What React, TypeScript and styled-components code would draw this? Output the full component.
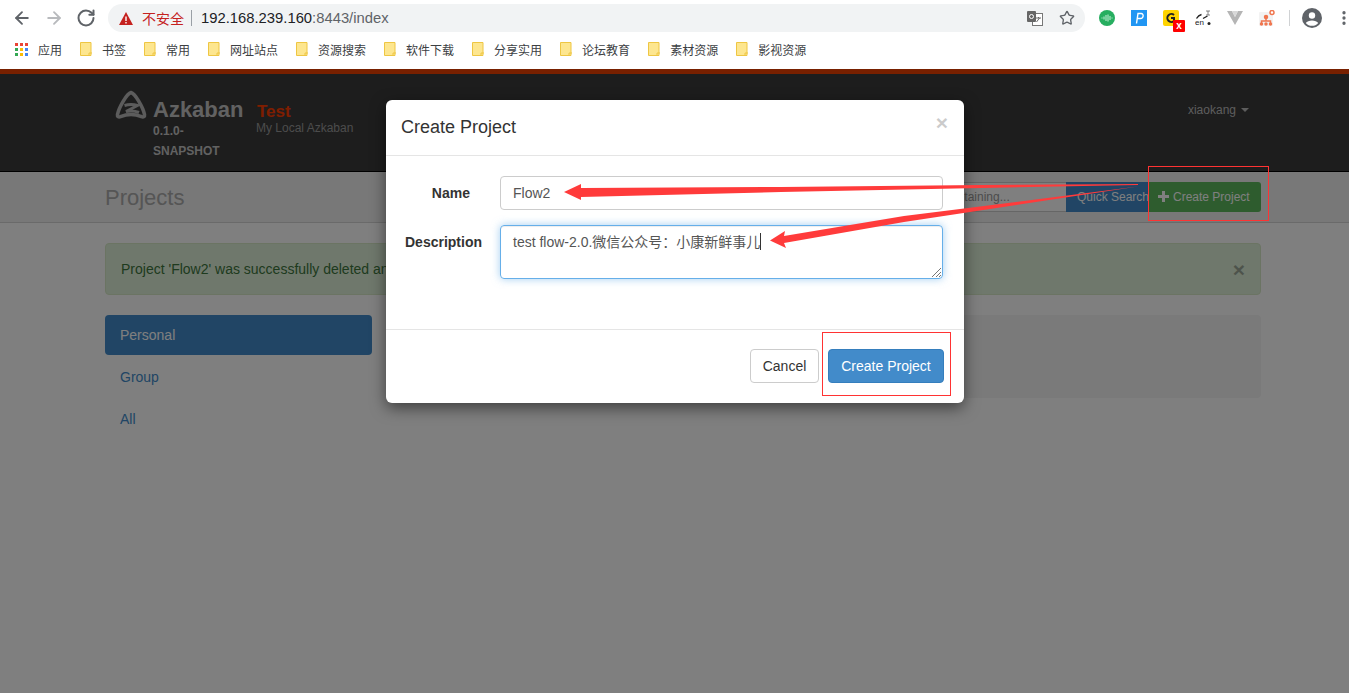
import { createGlobalStyle, styled } from "styled-components";
import { ArrowLeft, ArrowRight, RotateCw, Star, MoreVertical } from "lucide-react";

const bookmarks = ["书签", "常用", "网址站点", "资源搜索", "软件下载", "分享实用", "论坛教育", "素材资源", "影视资源"];

const GlobalStyle = createGlobalStyle`
  html, body {
    margin: 0;
    padding: 0;
    height: 100%;
    background: #fff;
    overflow: hidden;
  }
  body {
    font-family: "Liberation Sans", "Noto Sans CJK SC", sans-serif;
    font-size: 14px;
    color: #333;
  }
  * { box-sizing: border-box; }
`;

const Screen = styled.div`
  position: relative;
  width: 1352px;
  height: 693px;
  overflow: hidden;
`;

const Toolbar = styled.div`
  display: flex;
  align-items: center;
  height: 36px;
  padding: 0 0 0 12px;
`;

const NavButton = styled.span<{ $muted?: boolean }>`
  display: flex;
  flex-shrink: 0;
  width: 32px;
  color: ${(p) => (p.$muted ? "#b8babd" : "#5f6368")};
`;

const Omnibox = styled.div`
  display: flex;
  flex-shrink: 0;
  align-items: center;
  width: 977px;
  height: 28px;
  padding: 0 11px;
  border-radius: 14px;
  background: #f1f3f4;
`;

const Insecure = styled.span`
  margin-left: 9px;
  color: #c5221f;
  font-size: 14px;
`;

const Divider = styled.span`
  width: 1px;
  height: 16px;
  margin: 0 9px 0 7px;
  background: #9aa0a6;
`;

const Host = styled.span`
  color: #202124;
  font-size: 14.8px;
`;

const UrlRest = styled.span`
  flex: 1;
  color: #5f6368;
  font-size: 14.8px;
`;

const OmniIcons = styled.span`
  display: flex;
  align-items: center;
  gap: 16px;
  margin-right: -1px;
  color: #5f6368;
`;

const Extensions = styled.div`
  display: flex;
  flex-shrink: 0;
  align-items: center;
  margin-left: 6px;
`;

const ExtSlot = styled.span`
  position: relative;
  display: flex;
  flex-shrink: 0;
  align-items: center;
  justify-content: center;
  width: 32px;
  height: 28px;
`;

const ExtSeparator = styled.span`
  width: 1px;
  height: 16px;
  margin: 0 6px;
  background: #d0d2d4;
`;

const XBadge = styled.span`
  position: absolute;
  left: 18px;
  top: 16px;
  width: 12px;
  height: 12px;
  border-radius: 1px;
  background: #f00;
  color: #fff;
  font-size: 10px;
  font-weight: 700;
  line-height: 11px;
  text-align: center;
`;

const MoreButton = styled.span`
  display: flex;
  flex-shrink: 0;
  margin-left: 7px;
  color: #5f6368;
`;

const BookmarkBar = styled.div`
  display: flex;
  align-items: center;
  height: 33px;
  padding: 0 0 7px 15px;
  font-size: 12px;
  color: #3c4043;
`;

const Bookmark = styled.span`
  display: flex;
  align-items: center;
  gap: 10px;
  margin-right: 18px;
`;

const Page = styled.div`
  position: relative;
  width: 1349px;
  height: 624px;
  border-top: 5px solid #f04000;
  background: #fff;
`;

const TopBar = styled.header`
  display: flex;
  justify-content: space-between;
  height: 98px;
  padding: 16px 100px 0 115px;
  background: #3b3b3b;
  border-bottom: 1px solid #000;
`;

const Brand = styled.div`
  display: flex;
  align-items: flex-start;
`;

const BrandName = styled.div`
  width: 103px;
  margin-left: 6px;
  color: #c4c4c4;
  font-weight: 700;
`;

const Wordmark = styled.div`
  margin: 8px 0 -1px;
  font-size: 22px;
  line-height: 24px;
`;

const Version = styled.div`
  font-size: 12px;
  line-height: 20px;
  color: #c4c4c4;
`;

const Instance = styled.div`
  margin-top: 12px;
`;

const InstanceName = styled.div`
  margin-left: 1px;
  color: #ff3c00;
  font-size: 17px;
  font-weight: 700;
  line-height: 20px;
`;

const InstanceNote = styled.div`
  margin-top: -1px;
  color: #999;
  font-size: 12px;
  line-height: 15px;
`;

const UserMenu = styled.div`
  display: flex;
  align-items: center;
  gap: 5px;
  height: 19px;
  margin-top: 10px;
  color: #bbb;
  font-size: 12px;
`;

const Caret = styled.span`
  width: 0;
  height: 0;
  margin-top: 1px;
  border-top: 4px solid #bbb;
  border-left: 4px solid transparent;
  border-right: 4px solid transparent;
`;

const HeaderBand = styled.div`
  display: flex;
  align-items: center;
  justify-content: space-between;
  height: 51px;
  padding: 0 88px 0 105px;
  background: #f0f0f0;
  border-bottom: 1px solid #d5d5d5;
`;

const PageTitle = styled.h1`
  margin: 2px 0 0;
  color: #aaa;
  font-size: 22px;
  font-weight: 400;
`;

const SearchGroup = styled.div`
  display: flex;
  height: 30px;
  margin-top: -1px;
`;

const SearchInput = styled.div`
  width: 300px;
  padding-left: 178px;
  border: 1px solid #ccc;
  border-right: none;
  background: #fff;
  color: #999;
  font-size: 12px;
  line-height: 28px;
  white-space: nowrap;
  overflow: hidden;
`;

const ToolButton = styled.div<{ $tone: "blue" | "green" }>`
  display: flex;
  flex-shrink: 0;
  align-items: center;
  gap: 4px;
  height: 30px;
  padding: 0 0 0 ${(p) => (p.$tone === "blue" ? "11px" : "9px")};
  color: #fff;
  font-size: 12px;
  white-space: nowrap;
  background: ${(p) => (p.$tone === "blue" ? "#428bca" : "#5cb85c")};
  border-radius: ${(p) => (p.$tone === "blue" ? "0" : "0 3px 3px 0")};
  width: ${(p) => (p.$tone === "blue" ? "83px" : "112px")};
`;

const Alert = styled.div`
  display: flex;
  align-items: center;
  justify-content: space-between;
  height: 52px;
  margin: 20px 88px 20px 105px;
  padding: 0 16px 0 15px;
  background: #dff0d8;
  border: 1px solid #d6e9c6;
  border-radius: 4px;
  color: #3c763d;
`;

const AlertClose = styled.span`
  color: #000;
  opacity: 0.3;
  font-size: 21px;
  font-weight: 700;
  line-height: 1;
  margin-right: -1px;
`;

const Content = styled.div`
  display: flex;
  gap: 15px;
  padding: 0 88px 0 105px;
`;

const SideNav = styled.nav`
  display: flex;
  flex-direction: column;
  gap: 2px;
  width: 267px;
`;

const SideItem = styled.div<{ $active?: boolean }>`
  height: 40px;
  padding: 0 15px;
  border-radius: 4px;
  line-height: 40px;
  color: ${(p) => (p.$active ? "#fff" : "#428bca")};
  background: ${(p) => (p.$active ? "#428bca" : "transparent")};
`;

const Well = styled.div`
  flex: 1;
  height: 83px;
  background: #f5f5f5;
  border-radius: 4px;
`;

const Backdrop = styled.div`
  position: absolute;
  inset: -5px 0 0 0;
  background: rgba(0, 0, 0, 0.5);
`;

const Modal = styled.div`
  position: absolute;
  left: 386px;
  top: 100px;
  width: 578px;
  height: 303px;
  background: #fff;
  border-radius: 6px;
  box-shadow: 0 5px 15px rgba(0, 0, 0, 0.5);
`;

const ModalHeader = styled.div`
  display: flex;
  align-items: flex-start;
  justify-content: space-between;
  height: 56px;
  padding: 15px 15px 0;
  border-bottom: 1px solid #e5e5e5;
`;

const ModalTitle = styled.h4`
  margin: 0;
  color: #333;
  font-size: 18px;
  font-weight: 400;
  line-height: 25px;
`;

const ModalClose = styled.span`
  margin: -3px 1px 0 0;
  color: #000;
  opacity: 0.2;
  font-size: 21px;
  font-weight: 700;
  line-height: 21px;
`;

const ModalBody = styled.div`
  display: grid;
  grid-template-columns: 81px 443px;
  grid-auto-rows: min-content;
  column-gap: 18px;
  row-gap: 15px;
  height: 174px;
  padding: 20px 0 0 15px;
  border-bottom: 1px solid #e5e5e5;
`;

const FieldLabel = styled.label<{ $inset?: number }>`
  padding: 7px ${(p) => p.$inset ?? 0}px 0 0;
  font-weight: 700;
  line-height: 20px;
  text-align: right;
`;

const TextField = styled.div`
  height: 34px;
  padding: 0 12px;
  border: 1px solid #ccc;
  border-radius: 4px;
  color: #555;
  line-height: 32px;
`;

const TextArea = styled.div`
  position: relative;
  height: 54px;
  padding: 6px 12px;
  border: 1px solid #66afe9;
  border-radius: 4px;
  color: #555;
  line-height: 20px;
  box-shadow: inset 0 1px 1px rgba(0, 0, 0, 0.075), 0 0 8px rgba(102, 175, 233, 0.6);
`;

const TextCaret = styled.span`
  display: inline-block;
  width: 1px;
  height: 17px;
  vertical-align: -3px;
  background: #333;
`;

const ResizeGrip = styled.svg`
  position: absolute;
  right: 1px;
  bottom: 1px;
`;

const ModalFooter = styled.div`
  display: flex;
  justify-content: flex-end;
  gap: 9px;
  padding: 19px 20px 0 0;
`;

const FooterButton = styled.div<{ $primary?: boolean }>`
  width: ${(p) => (p.$primary ? "116px" : "69px")};
  height: 34px;
  border: 1px solid ${(p) => (p.$primary ? "#357ebd" : "#ccc")};
  border-radius: 4px;
  background: ${(p) => (p.$primary ? "#428bca" : "#fff")};
  color: ${(p) => (p.$primary ? "#fff" : "#333")};
  line-height: 32px;
  text-align: center;
`;

const Annotations = styled.svg`
  position: absolute;
  left: 0;
  top: 0;
  pointer-events: none;
`;

const Folder = () => (
  <svg width="12" height="14" viewBox="0 0 12 14">
    <path d="M.5.5h10.5v13H.5z" fill="#fde68f" stroke="#eec643" />
    <path d="M9 13.5v-2.500h3" fill="none" stroke="#eec643" />
  </svg>
);

const Apps = () => (
  <svg width="13" height="13" viewBox="0 0 13 13">
    {["#ea4335", "#ea4335", "#ea4335", "#34a853", "#fbbc05", "#4285f4", "#34a853", "#fbbc05", "#4285f4"].map((c, i) => (
      <rect key={i} x={(i % 3) * 5} y={Math.floor(i / 3) * 5} width="3" height="3" fill={c} />
    ))}
  </svg>
);

const AzkabanLogo = () => (
  <svg width="32" height="31" viewBox="0 0 32 31" fill="none" stroke="#b8b8b8">
    <path d="M16 2.500C12 3.500 4 17 2.500 24.500c-.3 2 1 3 3 2.200 6.500-2.700 14.500-2.700 21 0 2 .8 3.300-.2 3-2.200C28 17 20 3.500 16 2.500z" strokeWidth="3.600" strokeLinejoin="round" />
    <path d="M9.500 15.500c4-1.200 9-1.200 13 0l-11.500 6c4-.8 9-.6 13 1" strokeWidth="3" />
  </svg>
);

export default function App() {
  return (
    <Screen>
      <GlobalStyle />
      <Toolbar>
        <NavButton><ArrowLeft size={20} strokeWidth={2.2} /></NavButton>
        <NavButton $muted><ArrowRight size={20} strokeWidth={2.2} /></NavButton>
        <NavButton><RotateCw size={20} strokeWidth={2.4} /></NavButton>
        <Omnibox>
          <svg width="14" height="13" viewBox="0 0 14 13">
            <path d="M7 0l7 13H0z" fill="#c5221f" />
            <path d="M6.300 4.500h1.400v4.500H6.300zM6.300 10h1.400v1.400H6.300z" fill="#fff" />
          </svg>
          <Insecure>不安全</Insecure>
          <Divider />
          <Host>192.168.239.160</Host>
          <UrlRest>:8443/index</UrlRest>
          <OmniIcons>
            <svg width="16" height="16" viewBox="0 0 16 16">
              <rect x="5.500" y="3.500" width="10" height="12" fill="#fff" stroke="#777" />
              <rect x="0" y="1" width="9" height="11" rx="1" fill="#666" />
              <circle cx="4.500" cy="6.500" r="2" fill="none" stroke="#fff" />
              <path d="M9 8h5M11.500 7v1M9.500 12l3-4" stroke="#666" fill="none" />
            </svg>
            <Star size={16} strokeWidth={2} />
          </OmniIcons>
        </Omnibox>
        <Extensions>
          <ExtSlot>
            <svg width="16" height="16" viewBox="0 0 16 16">
              <circle cx="8" cy="8" r="8" fill="#27ae60" />
              <path d="M2.500 8h1M5 6.500v3M7 5v6M9 4.500v7M11 6v4M12.500 8h1" stroke="#c9f3da" strokeWidth="1" />
            </svg>
          </ExtSlot>
          <ExtSlot>
            <svg width="16" height="16" viewBox="0 0 16 16">
              <rect width="16" height="16" fill="#2196f3" />
              <path d="M5.500 13.500l1.500-10h3.200c2.800 0 2.600 5-.7 5H6.500" fill="none" stroke="#fff" strokeWidth="1.400" />
            </svg>
          </ExtSlot>
          <ExtSlot>
            <svg width="16" height="16" viewBox="0 0 16 16">
              <rect width="16" height="16" rx="2" fill="#ffd400" />
              <path d="M11 5a4 4 0 1 0 0 6V8H8" fill="none" stroke="#222" strokeWidth="2" />
            </svg>
            <XBadge>x</XBadge>
          </ExtSlot>
          <ExtSlot>
            <svg width="16" height="16" viewBox="0 0 16 16" fill="none" stroke="#222">
              <path d="M1.500 8.500c1.500-2.500 3-3.500 5-4M8 8.500l4.500-2.500" strokeWidth="1.400" />
              <path d="M11 1h4M13 1v4M11 5h4" strokeWidth=".8" stroke="#666" />
              <text x="0" y="15" fontSize="8" fill="#222" stroke="none" fontFamily="Liberation Sans, sans-serif">en</text>
              <circle cx="14" cy="13.500" r="1.500" fill="#222" stroke="none" />
            </svg>
          </ExtSlot>
          <ExtSlot>
            <svg width="16" height="14" viewBox="0 0 16 14">
              <path d="M0 0h5l3 6 3-6h5L8 14z" fill="#b5b5b5" />
              <path d="M5 0h6L8 6z" fill="#d8d8d8" />
            </svg>
          </ExtSlot>
          <ExtSlot>
            <svg width="16" height="16" viewBox="0 0 16 16" fill="none" stroke="#f0764f" strokeWidth="1.500">
              <rect y="2" width="14" height="14" rx="1" fill="#f3f3f3" stroke="none" />
              <path d="M7 7v4M2.500 14v-3h9v3" />
              <circle cx="7" cy="7" r="1.500" fill="#f0764f" />
              <circle cx="2.500" cy="14" r="1" fill="#f0764f" />
              <circle cx="7" cy="14" r="1" fill="#f0764f" />
              <circle cx="11.500" cy="14" r="1" fill="#f0764f" />
              <circle cx="13" cy="2.500" r="2" fill="#fff" />
            </svg>
          </ExtSlot>
          <ExtSeparator />
          <ExtSlot>
            <svg width="20" height="20" viewBox="0 0 20 20">
              <circle cx="10" cy="10" r="10" fill="#5f6368" />
              <circle cx="10" cy="7.500" r="3.200" fill="#fff" />
              <path d="M3.800 15c2-3.500 10.400-3.500 12.400 0-3 3.800-9.400 3.800-12.400 0z" fill="#fff" />
            </svg>
          </ExtSlot>
          <MoreButton><MoreVertical size={18} strokeWidth={2.4} /></MoreButton>
        </Extensions>
      </Toolbar>
      <BookmarkBar>
        <Bookmark><Apps />应用</Bookmark>
        {bookmarks.map((name) => (
          <Bookmark key={name}><Folder />{name}</Bookmark>
        ))}
      </BookmarkBar>
      <Page>
        <TopBar>
          <Brand>
            <AzkabanLogo />
            <BrandName>
              <Wordmark>Azkaban</Wordmark>
              <Version>0.1.0-<br />SNAPSHOT</Version>
            </BrandName>
            <Instance>
              <InstanceName>Test</InstanceName>
              <InstanceNote>My Local Azkaban</InstanceNote>
            </Instance>
          </Brand>
          <UserMenu>xiaokang <Caret /></UserMenu>
        </TopBar>
        <HeaderBand>
          <PageTitle>Projects</PageTitle>
          <SearchGroup>
            <SearchInput>containing...</SearchInput>
            <ToolButton $tone="blue">Quick Search</ToolButton>
            <ToolButton $tone="green">
              <svg width="11" height="11" viewBox="0 0 11 11"><path d="M4 0h3v4h4v3H7v4H4V7H0V4h4z" fill="#fff" /></svg>
              Create Project
            </ToolButton>
          </SearchGroup>
        </HeaderBand>
        <Alert>
          Project 'Flow2' was successfully deleted and is no longer available.
          <AlertClose>×</AlertClose>
        </Alert>
        <Content>
          <SideNav>
            <SideItem $active>Personal</SideItem>
            <SideItem>Group</SideItem>
            <SideItem>All</SideItem>
          </SideNav>
          <Well />
        </Content>
        <Backdrop />
      </Page>
      <Modal>
        <ModalHeader>
          <ModalTitle>Create Project</ModalTitle>
          <ModalClose>×</ModalClose>
        </ModalHeader>
        <ModalBody>
          <FieldLabel $inset={12}>Name</FieldLabel>
          <TextField>Flow2</TextField>
          <FieldLabel>Description</FieldLabel>
          <TextArea>
            test flow-2.0.微信公众号：小康新鲜事儿<TextCaret />
            <ResizeGrip width="9" height="9" viewBox="0 0 9 9" stroke="#777">
              <path d="M0 9l9-9M4 9l5-5M7 9l2-2" />
            </ResizeGrip>
          </TextArea>
        </ModalBody>
        <ModalFooter>
          <FooterButton>Cancel</FooterButton>
          <FooterButton $primary>Create Project</FooterButton>
        </ModalFooter>
      </Modal>
      <Annotations width="1352" height="693" viewBox="0 0 1352 693">
        <rect x="1148.500" y="166.500" width="120" height="54" fill="none" stroke="#f33" />
        <rect x="822.500" y="332.500" width="128" height="63" fill="none" stroke="#f33" />
        <path d="M564 192l17-8v4l200-1 200-2 157-1v1l-157 3-200 4-200 5v3z" fill="#ff3b3b" />
        <path d="M770 240.500l15-9.500-1 5 120-20 234-29.500-234 35.500-120 21 2 5z" fill="#ff3b3b" />
      </Annotations>
    </Screen>
  );
}
